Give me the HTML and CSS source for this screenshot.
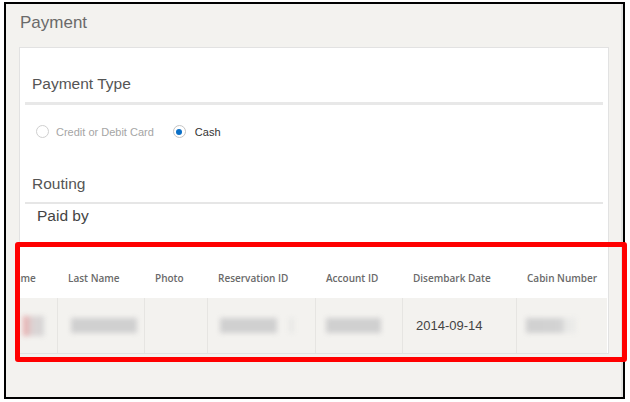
FILE: index.html
```html
<!DOCTYPE html>
<html lang="en">
<head>
<meta charset="utf-8">
<title>Payment</title>
<link rel="stylesheet" href="styles.css">
</head>
<body>
<div class="frame">
  <div class="panel">
    <h1 class="title">Payment</h1>
    <div class="card">
      <div class="section">
        <h2 class="heading heading-type">Payment Type</h2>
        <div class="radios">
          <label class="radio"><span class="radio-dot"></span><span class="radio-label radio-label-muted">Credit or Debit Card</span></label>
          <label class="radio radio-checked"><span class="radio-dot"></span><span class="radio-label radio-label-on">Cash</span></label>
        </div>
        <h2 class="heading heading-routing">Routing</h2>
        <div class="paid-by">Paid by</div>
      </div>
      <div class="table-viewport">
        <div class="grid">
          <div class="th">First Name</div>
          <div class="th">Last Name</div>
          <div class="th">Photo</div>
          <div class="th">Reservation ID</div>
          <div class="th">Account ID</div>
          <div class="th">Disembark Date</div>
          <div class="th">Cabin Number</div>

          <div class="td td-first"><span class="blur blur-c1"></span></div>
          <div class="td"><span class="blur blur-c2"></span></div>
          <div class="td"></div>
          <div class="td"><span class="blur blur-c4"></span><span class="blur blur-faint"></span></div>
          <div class="td"><span class="blur blur-c5"></span></div>
          <div class="td td-text">2014-09-14</div>
          <div class="td"><span class="blur blur-c7"></span></div>
        </div>
      </div>
    </div>
  </div>
</div>
<div class="annotation"></div>
</body>
</html>
```

FILE: styles.css
```css
body {
  margin: 0;
  background: #fff;
  font-family: "Liberation Sans", Arial, sans-serif;
}

.frame {
  margin: 2px 0 0 4px;
  width: 621px;
  height: 397px;
  box-sizing: border-box;
  border: 2px solid #000;
  background: #f3f2ef;
}

.panel {
  height: 100%;
  box-sizing: border-box;
  padding-top: 9px;
  border-right: 2px solid #e2e2e0;
}

.title {
  margin: 0 0 14px 14px;
  font-size: 17px;
  line-height: 20px;
  font-weight: normal;
  color: #6a6a6a;
}

.card {
  margin-left: 13px;
  width: 590px;
  box-sizing: border-box;
  background: #fff;
  border: 1px solid #e2e2e2;
}

.section {
  margin: 0 5px;
}

.heading {
  margin: 0;
  padding-left: 7px;
  font-size: 15.5px;
  line-height: 18px;
  font-weight: normal;
  color: #555;
}

.heading-type {
  padding-top: 27px;
  padding-bottom: 9px;
  border-bottom: 3px solid #e8e8e8;
}

.radios {
  display: flex;
  align-items: center;
  height: 13px;
  margin: 20px 0 0 11px;
  font-size: 11px;
}

.radio {
  display: flex;
  align-items: center;
  gap: 7px;
}

.radio + .radio {
  margin-left: 19px;
}

.radio-dot {
  width: 13px;
  height: 13px;
  box-sizing: border-box;
  border: 1px solid #cfcfcf;
  border-radius: 50%;
  background: #fff;
  display: flex;
  align-items: center;
  justify-content: center;
}

.radio-checked .radio-dot {
  border-color: #c4c4c4;
}

.radio-checked .radio-dot::after {
  content: "";
  width: 6px;
  height: 6px;
  border-radius: 50%;
  background: #0b6fc6;
}

.radio-label-muted {
  color: #a5a5a5;
}

.radio-label-on {
  color: #333;
  margin-left: 2px;
}

.heading-routing {
  margin-top: 37px;
  padding-bottom: 9px;
  border-bottom: 2px solid #e6e6e6;
}

.paid-by {
  padding: 3px 0 0 12px;
  font-size: 15.5px;
  line-height: 18px;
  color: #444;
}

.table-viewport {
  margin-top: 22px;
  overflow: hidden;
}

.grid {
  display: grid;
  grid-template-columns: 85px 87px 63px 108px 87px 114px 91px;
  width: 635px;
  margin-left: -48px;
}

.th {
  height: 51px;
  box-sizing: border-box;
  padding: 10px 0 0 11px;
  display: flex;
  align-items: center;
  background: #fff;
  color: #6a6a6a;
  font-family: "Open Sans", "Liberation Sans", sans-serif;
  font-weight: 600;
  font-size: 10px;
  white-space: nowrap;
}

.td {
  height: 55px;
  box-sizing: border-box;
  display: flex;
  align-items: center;
  background: #f3f2ef;
  border-left: 1px solid #e6e5e2;
}

.td-first {
  border-left: none;
}

.td-text {
  padding-left: 13px;
  font-size: 13px;
  color: #444;
}

.blur {
  display: block;
  height: 15px;
  background: #d0d0d0;
  filter: blur(2.5px);
}

.blur-c1 {
  margin-left: 51px;
  width: 21px;
  height: 20px;
  background: linear-gradient(90deg, #eaa8a8 0%, #dcd4d4 45%, #d6d6d6 100%);
}

.blur-c2 {
  margin-left: 13px;
  width: 66px;
}

.blur-c4 {
  margin-left: 12px;
  width: 57px;
}

.blur-faint {
  margin-left: 12px;
  width: 5px;
  background: #e8e8e6;
}

.blur-c5 {
  margin-left: 10px;
  width: 55px;
}

.blur-c7 {
  margin-left: 9px;
  width: 50px;
  background: linear-gradient(90deg, #d0d0d0 0%, #d3d3d3 70%, #e9e9e7 80%, #ebebe9 100%);
}

.annotation {
  position: absolute;
  left: 15px;
  top: 242px;
  width: 612px;
  height: 120px;
  box-sizing: border-box;
  border: 5px solid #f00;
  border-radius: 3px;
}
```
